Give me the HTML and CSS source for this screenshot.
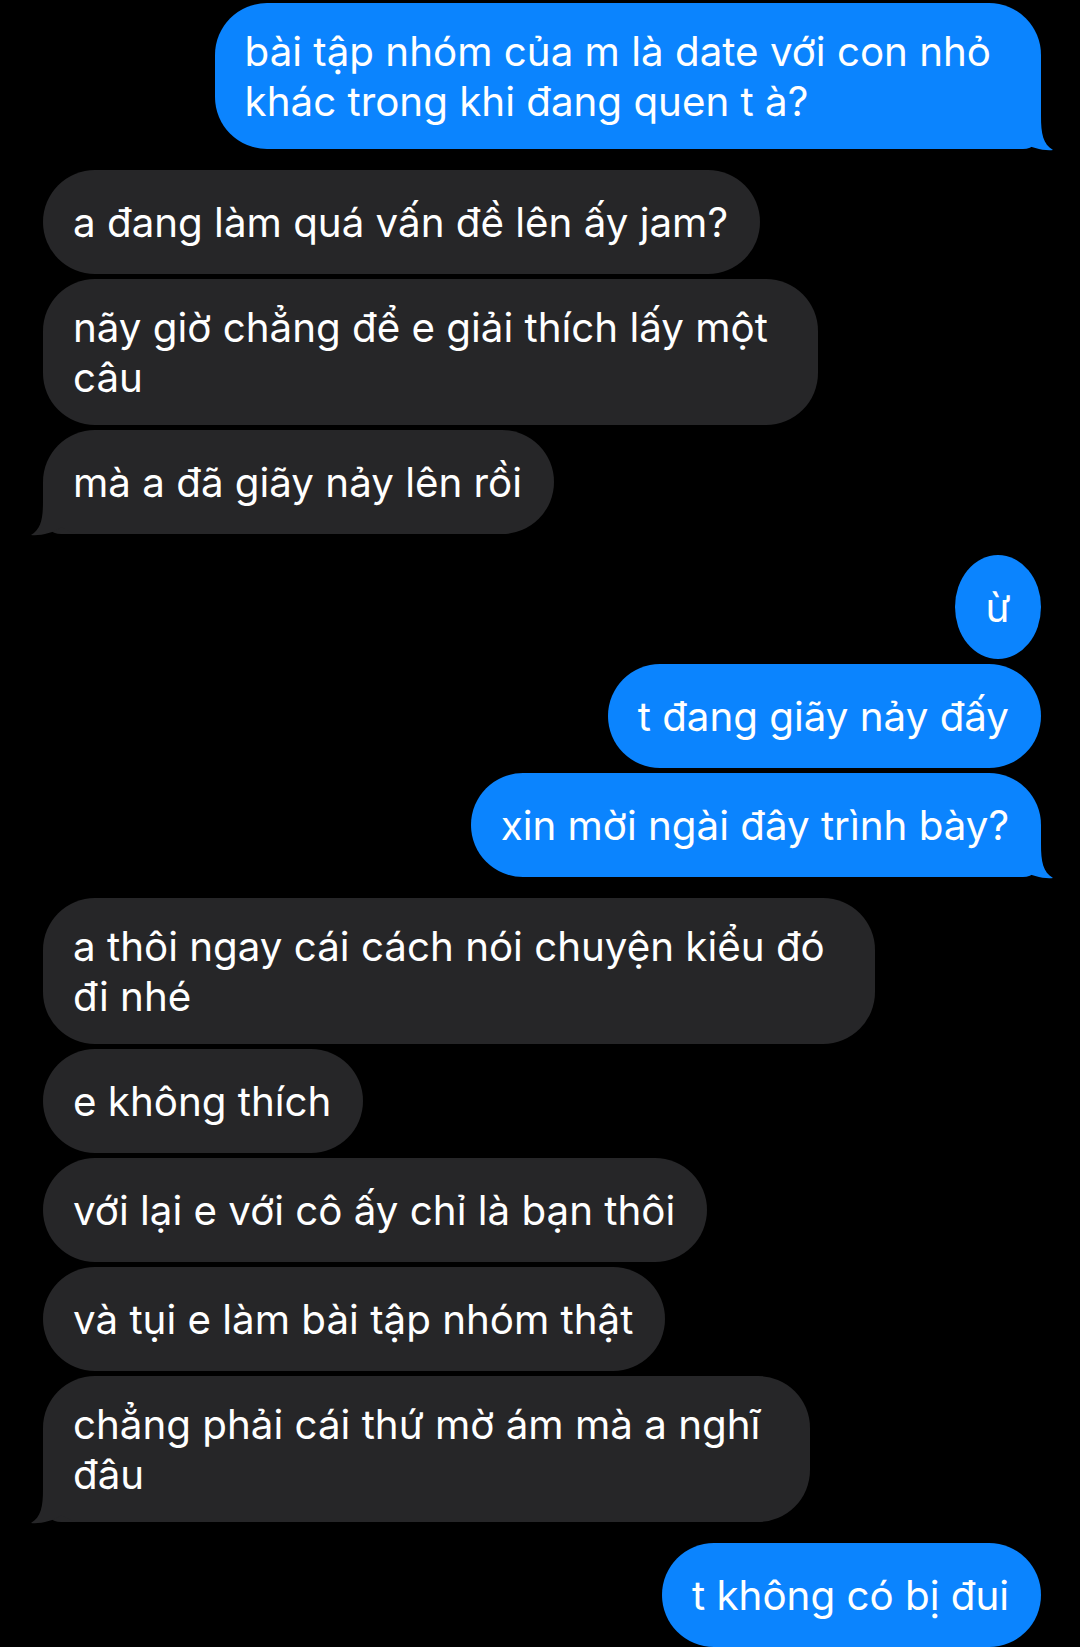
FILE: index.html
```html
<!DOCTYPE html>
<html lang="vi">
<head>
<meta charset="utf-8">
<title>Messages</title>
<link rel="stylesheet" href="styles.css">
</head>
<body>
<div class="thread">
  <div class="group sent">
    <div class="bubble blue multi has-tail-right"><span class="text">bài tập nhóm của m là date với con nhỏ<br>khác trong khi đang quen t à?</span><svg class="tail tail-right" viewBox="0 0 54 35" width="54" height="35"><path d="M0,0 H41 C41,18 43,28 53,34 C44,35 31,32 22,26 C15,31 8,33 0,33 Z"/></svg></div>
  </div>

  <div class="group received">
    <div class="bubble gray"><span class="text">a đang làm quá vấn đề lên ấy jam?</span></div>
    <div class="bubble gray multi"><span class="text">nãy giờ chẳng để e giải thích lấy một<br>câu</span></div>
    <div class="bubble gray has-tail-left"><span class="text">mà a đã giãy nảy lên rồi</span><svg class="tail tail-left" viewBox="0 0 54 35" width="54" height="35"><path d="M0,0 H41 C41,18 43,28 53,34 C44,35 31,32 22,26 C15,31 8,33 0,33 Z"/></svg></div>
  </div>

  <div class="group sent">
    <div class="bubble blue tiny"><span class="text">ừ</span></div>
    <div class="bubble blue"><span class="text">t đang giãy nảy đấy</span></div>
    <div class="bubble blue has-tail-right"><span class="text">xin mời ngài đây trình bày?</span><svg class="tail tail-right" viewBox="0 0 54 35" width="54" height="35"><path d="M0,0 H41 C41,18 43,28 53,34 C44,35 31,32 22,26 C15,31 8,33 0,33 Z"/></svg></div>
  </div>

  <div class="group received">
    <div class="bubble gray multi"><span class="text">a thôi ngay cái cách nói chuyện kiểu đó<br>đi nhé</span></div>
    <div class="bubble gray"><span class="text">e không thích</span></div>
    <div class="bubble gray"><span class="text">với lại e với cô ấy chỉ là bạn thôi</span></div>
    <div class="bubble gray"><span class="text">và tụi e làm bài tập nhóm thật</span></div>
    <div class="bubble gray multi has-tail-left"><span class="text">chẳng phải cái thứ mờ ám mà a nghĩ<br>đâu</span><svg class="tail tail-left" viewBox="0 0 54 35" width="54" height="35"><path d="M0,0 H41 C41,18 43,28 53,34 C44,35 31,32 22,26 C15,31 8,33 0,33 Z"/></svg></div>
  </div>

  <div class="group sent">
    <div class="bubble blue"><span class="text">t không có bị đui</span></div>
  </div>
</div>
</body>
</html>
```

FILE: styles.css
```css
html, body {
  margin: 0;
  padding: 0;
  background: #000;
}

body {
  width: 1080px;
  height: 1647px;
  overflow: hidden;
  font-family: Inter, "Noto Sans", "Liberation Sans", sans-serif;
  color: #fff;
}

.thread {
  display: flex;
  flex-direction: column;
  gap: 21px;
  padding: 3px 39px 0 43px;
}

.group {
  display: flex;
  flex-direction: column;
  gap: 5px;
}

.group.sent {
  align-items: flex-end;
}

.group.received {
  align-items: flex-start;
}

.bubble {
  position: relative;
  box-sizing: border-box;
  display: flex;
  align-items: center;
  min-height: 104px;
  padding: 24px 32px 22px 30px;
  border-radius: 52px;
  white-space: nowrap;
  font-size: 40.3px;
  line-height: 50px;
}

.bubble.multi {
  padding-right: 50px;
}

.bubble.tiny {
  padding: 24px 0 22px 0;
  width: 86px;
  justify-content: center;
  border-radius: 50%;
}

.bubble.has-tail-right {
  border-bottom-right-radius: 18px;
}

.bubble.has-tail-left {
  border-bottom-left-radius: 18px;
}

.blue {
  background: #0b84fe;
  fill: #0b84fe;
}

.gray {
  background: #262628;
  fill: #262628;
}

.text {
  display: block;
}

.tail {
  position: absolute;
  bottom: -2px;
}

.tail-right {
  right: -13px;
}

.tail-left {
  left: -13px;
  transform: scaleX(-1);
}
```
